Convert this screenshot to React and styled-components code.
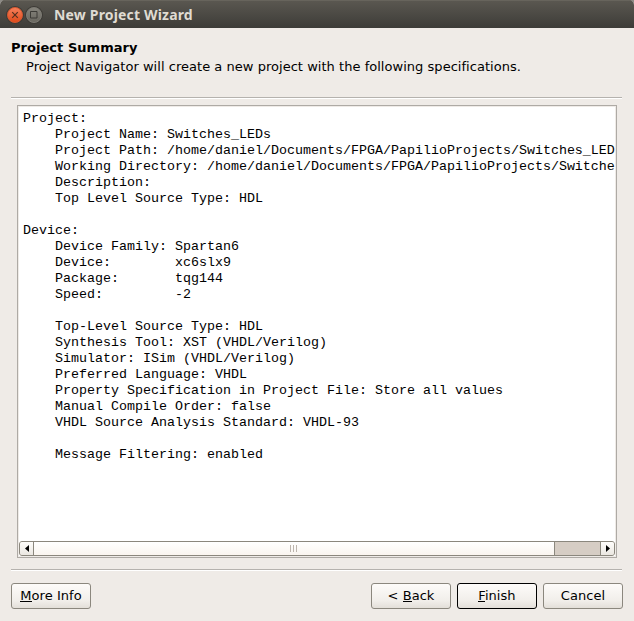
import React from "react";
import styled, { createGlobalStyle } from "styled-components";

const GlobalStyle = createGlobalStyle`
  * { box-sizing: border-box; }
  body { margin: 0; background: #8d8b86; overflow: hidden; }
`;

const Window = styled.div`
  display: flex;
  flex-direction: column;
  width: 634px;
  height: 621px;
  overflow: hidden;
  border-radius: 5px 5px 0 0;
  background: #efebe7;
  color: #000;
  font: 13px "DejaVu Sans", sans-serif;
`;

const TitleBar = styled.header`
  display: flex;
  align-items: center;
  flex: none;
  height: 28px;
  padding: 1px 0 0 7px;
  background: linear-gradient(#5b5851, #3d3c38);
  box-shadow: inset 0 1px #67645c;
`;

const WindowButton = styled.span`
  display: flex;
  align-items: center;
  justify-content: center;
  width: 16px;
  height: 16px;
  margin-right: 3px;
  border-radius: 50%;
  border: 1px solid ${(p) => (p.$close ? "#d9582f" : "#7d7b74")};
  background: ${(p) =>
    p.$close ? "linear-gradient(#f67f5a, #df4b1b)" : "linear-gradient(#85837b, #69675f)"};
  box-shadow: 0 0 0 1px #3d3b36;

  svg {
    flex: none;
  }
`;

const Title = styled.h1`
  margin: 0 0 0 9px;
  color: #dfdbd2;
  font: bold 14px/20px "Noto Sans", sans-serif;
  letter-spacing: 0.17px;
  white-space: nowrap;
`;

const Intro = styled.section`
  height: 69px;
  padding: 11px 11px 0;
`;

const Heading = styled.h2`
  margin: 0;
  font-size: 13px;
  line-height: 17px;
  letter-spacing: 0.04px;
`;

const Hint = styled.p`
  margin: 2px 0 0 15px;
  line-height: 17px;
  letter-spacing: 0.033px;
  white-space: nowrap;
`;

const Rule = styled.hr`
  flex: none;
  width: 611px;
  height: 2px;
  margin: 0 0 0 11px;
  border: 0;
  border-top: 1px solid #b5b2ae;
  background: #fff;
`;

const SummaryFrame = styled.main`
  display: flex;
  flex-direction: column;
  flex: none;
  width: 600px;
  height: 453px;
  margin: 6px 0 11px 17px;
  padding: 1px;
  border: 1px solid #aeaaa5;
  background: #fff;
  box-shadow: inset 0 0 0 1px #efebe7;
`;

const SummaryText = styled.pre`
  flex: 1;
  min-height: 0;
  margin: 0;
  padding: 4px 0 0 4px;
  overflow: hidden;
  font: 13.333px/16px "Liberation Mono", monospace;
`;

const ScrollBar = styled.div`
  display: flex;
  flex: none;
  height: 15px;
  border: 1px solid #8b877d;
  border-radius: 3px;
  background: #d6cdc4;
  overflow: hidden;
`;

const ArrowButton = styled.span`
  display: flex;
  align-items: center;
  justify-content: center;
  width: 14px;
  background: linear-gradient(#fefdfb, #ebe7e1);
  border: 0 solid #8b877d;
  border-width: ${(p) => (p.$end ? "0 0 0 1px" : "0 1px 0 0")};
`;

const Thumb = styled.span`
  display: flex;
  align-items: center;
  justify-content: center;
  gap: 2px;
  width: 521px;
  margin-right: auto;
  padding-right: 2px;
  border-right: 1px solid #8b877d;
  background: linear-gradient(#fff, #faf5ef);
`;

const Grip = styled.i`
  width: 1px;
  height: 7px;
  background: #bdb5ad;
`;

const Footer = styled.footer`
  display: flex;
  gap: 6px;
  padding: 12px 11px 0;
`;

const Button = styled.button`
  width: 80px;
  height: 26px;
  margin: 0;
  margin-right: ${(p) => (p.$leading ? "274px" : "0")};
  padding: 0 0 1px;
  flex: none;
  border: 1px solid ${(p) => (p.$primary ? "#000" : "#8b877e")};
  border-radius: 3px;
  background: linear-gradient(#fdfbf9 0, #f1eeea 70%, #e3dfd9 100%);
  color: #000;
  font: 13px/16px "DejaVu Sans", sans-serif;
  letter-spacing: 0.04px;
`;

const Mnemonic = styled.span`
  background: linear-gradient(#000, #000) 0 calc(100% - 1px) / 100% 1px no-repeat;
`;

const summary = `Project:
    Project Name: Switches_LEDs
    Project Path: /home/daniel/Documents/FPGA/PapilioProjects/Switches_LEDs
    Working Directory: /home/daniel/Documents/FPGA/PapilioProjects/Switches_LEDs
    Description:
    Top Level Source Type: HDL

Device:
    Device Family: Spartan6
    Device:        xc6slx9
    Package:       tqg144
    Speed:         -2

    Top-Level Source Type: HDL
    Synthesis Tool: XST (VHDL/Verilog)
    Simulator: ISim (VHDL/Verilog)
    Preferred Language: VHDL
    Property Specification in Project File: Store all values
    Manual Compile Order: false
    VHDL Source Analysis Standard: VHDL-93

    Message Filtering: enabled`;

export default function App() {
  return (
    <>
      <GlobalStyle />
      <Window>
        <TitleBar>
          <WindowButton $close>
            <svg width="8" height="8" viewBox="0 0 8 8">
              <path d="M1.2 1.2l5.6 5.6M6.8 1.2l-5.6 5.6" stroke="#55301f" strokeWidth="1.2" />
            </svg>
          </WindowButton>
          <WindowButton>
            <svg width="8" height="8" viewBox="0 0 8 8">
              <path d="M.5 .5h6.5v6.5h-6.5z" fill="none" stroke="#3c3b36" />
            </svg>
          </WindowButton>
          <Title>New Project Wizard</Title>
        </TitleBar>
        <Intro>
          <Heading>Project Summary</Heading>
          <Hint>Project Navigator will create a new project with the following specifications.</Hint>
        </Intro>
        <Rule />
        <SummaryFrame>
          <SummaryText>{summary}</SummaryText>
          <ScrollBar>
            <ArrowButton>
              <svg width="4" height="7" viewBox="0 0 4 7">
                <path d="M4 0v7L0 3.5z" />
              </svg>
            </ArrowButton>
            <Thumb>
              <Grip />
              <Grip />
              <Grip />
            </Thumb>
            <ArrowButton $end>
              <svg width="4" height="7" viewBox="0 0 4 7">
                <path d="M0 0v7L4 3.5z" />
              </svg>
            </ArrowButton>
          </ScrollBar>
        </SummaryFrame>
        <Rule />
        <Footer>
          <Button $leading><Mnemonic>M</Mnemonic>ore Info</Button>
          <Button>&lt; <Mnemonic>B</Mnemonic>ack</Button>
          <Button $primary><Mnemonic>F</Mnemonic>inish</Button>
          <Button>Cancel</Button>
        </Footer>
      </Window>
    </>
  );
}
